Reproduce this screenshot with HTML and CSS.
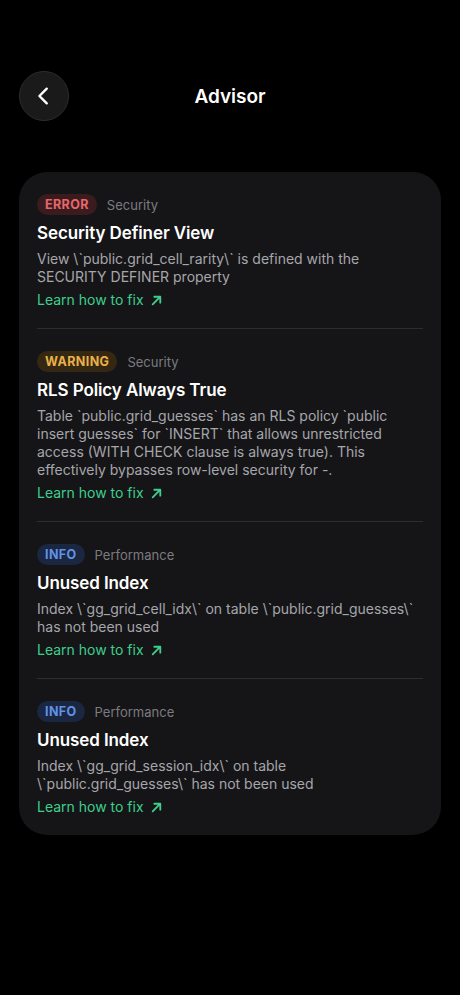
FILE: index.html
```html
<!DOCTYPE html>
<html lang="en">
<head>
  <meta charset="UTF-8" />
  <meta name="viewport" content="width=device-width, initial-scale=1.0"/>
  <title>Advisor</title>
  <link rel="stylesheet" href="styles.css">
</head>
<body>
  <header class="topbar">
    <button class="back-btn" aria-label="Back">
      <svg width="22" height="22" viewBox="0 0 24 24" fill="none" stroke="#fff" stroke-width="2.6" stroke-linecap="round" stroke-linejoin="round"><path d="M15 4 L7 12 L15 20"/></svg>
    </button>
    <h1>Advisor</h1>
  </header>

  <div class="card">
    <div class="issue">
      <div class="meta"><span class="badge error">ERROR</span><span class="category">Security</span></div>
      <h2>Security Definer View</h2>
      <p>View \`public.grid_cell_rarity\` is defined with the SECURITY DEFINER property</p>
      <a class="fix" href="#">Learn how to fix <svg width="13" height="13" viewBox="0 0 12 12" fill="none" stroke="currentColor" stroke-width="1.7" stroke-linecap="round" stroke-linejoin="round"><path d="M2.5 9.5 L9.5 2.5 M4 2.5 H9.5 V8"/></svg></a>
    </div>
    <div class="issue">
      <div class="meta"><span class="badge warning">WARNING</span><span class="category">Security</span></div>
      <h2>RLS Policy Always True</h2>
      <p>Table `public.grid_guesses` has an RLS policy `public insert guesses` for `INSERT` that allows unrestricted access (WITH CHECK clause is always true). This effectively bypasses row-level security for -.</p>
      <a class="fix" href="#">Learn how to fix <svg width="13" height="13" viewBox="0 0 12 12" fill="none" stroke="currentColor" stroke-width="1.7" stroke-linecap="round" stroke-linejoin="round"><path d="M2.5 9.5 L9.5 2.5 M4 2.5 H9.5 V8"/></svg></a>
    </div>
    <div class="issue">
      <div class="meta"><span class="badge info">INFO</span><span class="category">Performance</span></div>
      <h2>Unused Index</h2>
      <p>Index \`gg_grid_cell_idx\` on table \`public.grid_guesses\` has not been used</p>
      <a class="fix" href="#">Learn how to fix <svg width="13" height="13" viewBox="0 0 12 12" fill="none" stroke="currentColor" stroke-width="1.7" stroke-linecap="round" stroke-linejoin="round"><path d="M2.5 9.5 L9.5 2.5 M4 2.5 H9.5 V8"/></svg></a>
    </div>
    <div class="issue">
      <div class="meta"><span class="badge info">INFO</span><span class="category">Performance</span></div>
      <h2>Unused Index</h2>
      <p>Index \`gg_grid_session_idx\` on table \`public.grid_guesses\` has not been used</p>
      <a class="fix" href="#">Learn how to fix <svg width="13" height="13" viewBox="0 0 12 12" fill="none" stroke="currentColor" stroke-width="1.7" stroke-linecap="round" stroke-linejoin="round"><path d="M2.5 9.5 L9.5 2.5 M4 2.5 H9.5 V8"/></svg></a>
    </div>
  </div>
</body>
</html>
```

FILE: styles.css
```css
body {
  margin: 0;
  background: #000;
  color: #f2f2f2;
  font-family: Inter, 'Noto Sans', sans-serif;
  padding: 71px 19px 40px;
}
.topbar {
  display: grid;
  grid-template-columns: 50px 1fr 50px;
  align-items: center;
  margin-bottom: 51px;
}
.back-btn {
  width: 50px;
  height: 50px;
  border-radius: 50%;
  background: #1a1a1b;
  border: 1px solid #2c2c2e;
  display: flex;
  align-items: center;
  justify-content: center;
  padding: 0;
}
h1 {
  margin: 0;
  text-align: center;
  font-size: 19px;
  font-weight: 600;
  color: #fff;
}
.card {
  background: #151517;
  border-radius: 28px;
  padding: 0 18px;
}
.issue {
  padding: 22px 0 19px;
  border-bottom: 1px solid #2d2d30;
}
.issue:last-child { border-bottom: none; }
.meta {
  display: flex;
  align-items: center;
  gap: 10px;
}
.badge {
  font-size: 12.5px;
  font-weight: 700;
  letter-spacing: 0.4px;
  line-height: 21px;
  padding: 0 8px;
  border-radius: 11px;
}
.badge.error { background: #3a1b1e; color: #e8676b; }
.badge.warning { background: #352812; color: #eab14a; }
.badge.info { background: #1b2640; color: #5f93e6; }
.category {
  font-size: 13px;
  color: #7b7b80;
}
h2 {
  margin: 7px 0 0;
  font-size: 17px;
  line-height: 22px;
  font-weight: 600;
  letter-spacing: -0.1px;
  color: #fff;
}
p {
  margin: 6px 0 0;
  font-size: 14px;
  line-height: 18px;
  color: #a6a6ab;
}
.fix {
  display: inline-flex;
  align-items: center;
  gap: 6px;
  margin-top: 5px;
  font-size: 14px;
  line-height: 18px;
  color: #3ecf8e;
  text-decoration: none;
}
```
